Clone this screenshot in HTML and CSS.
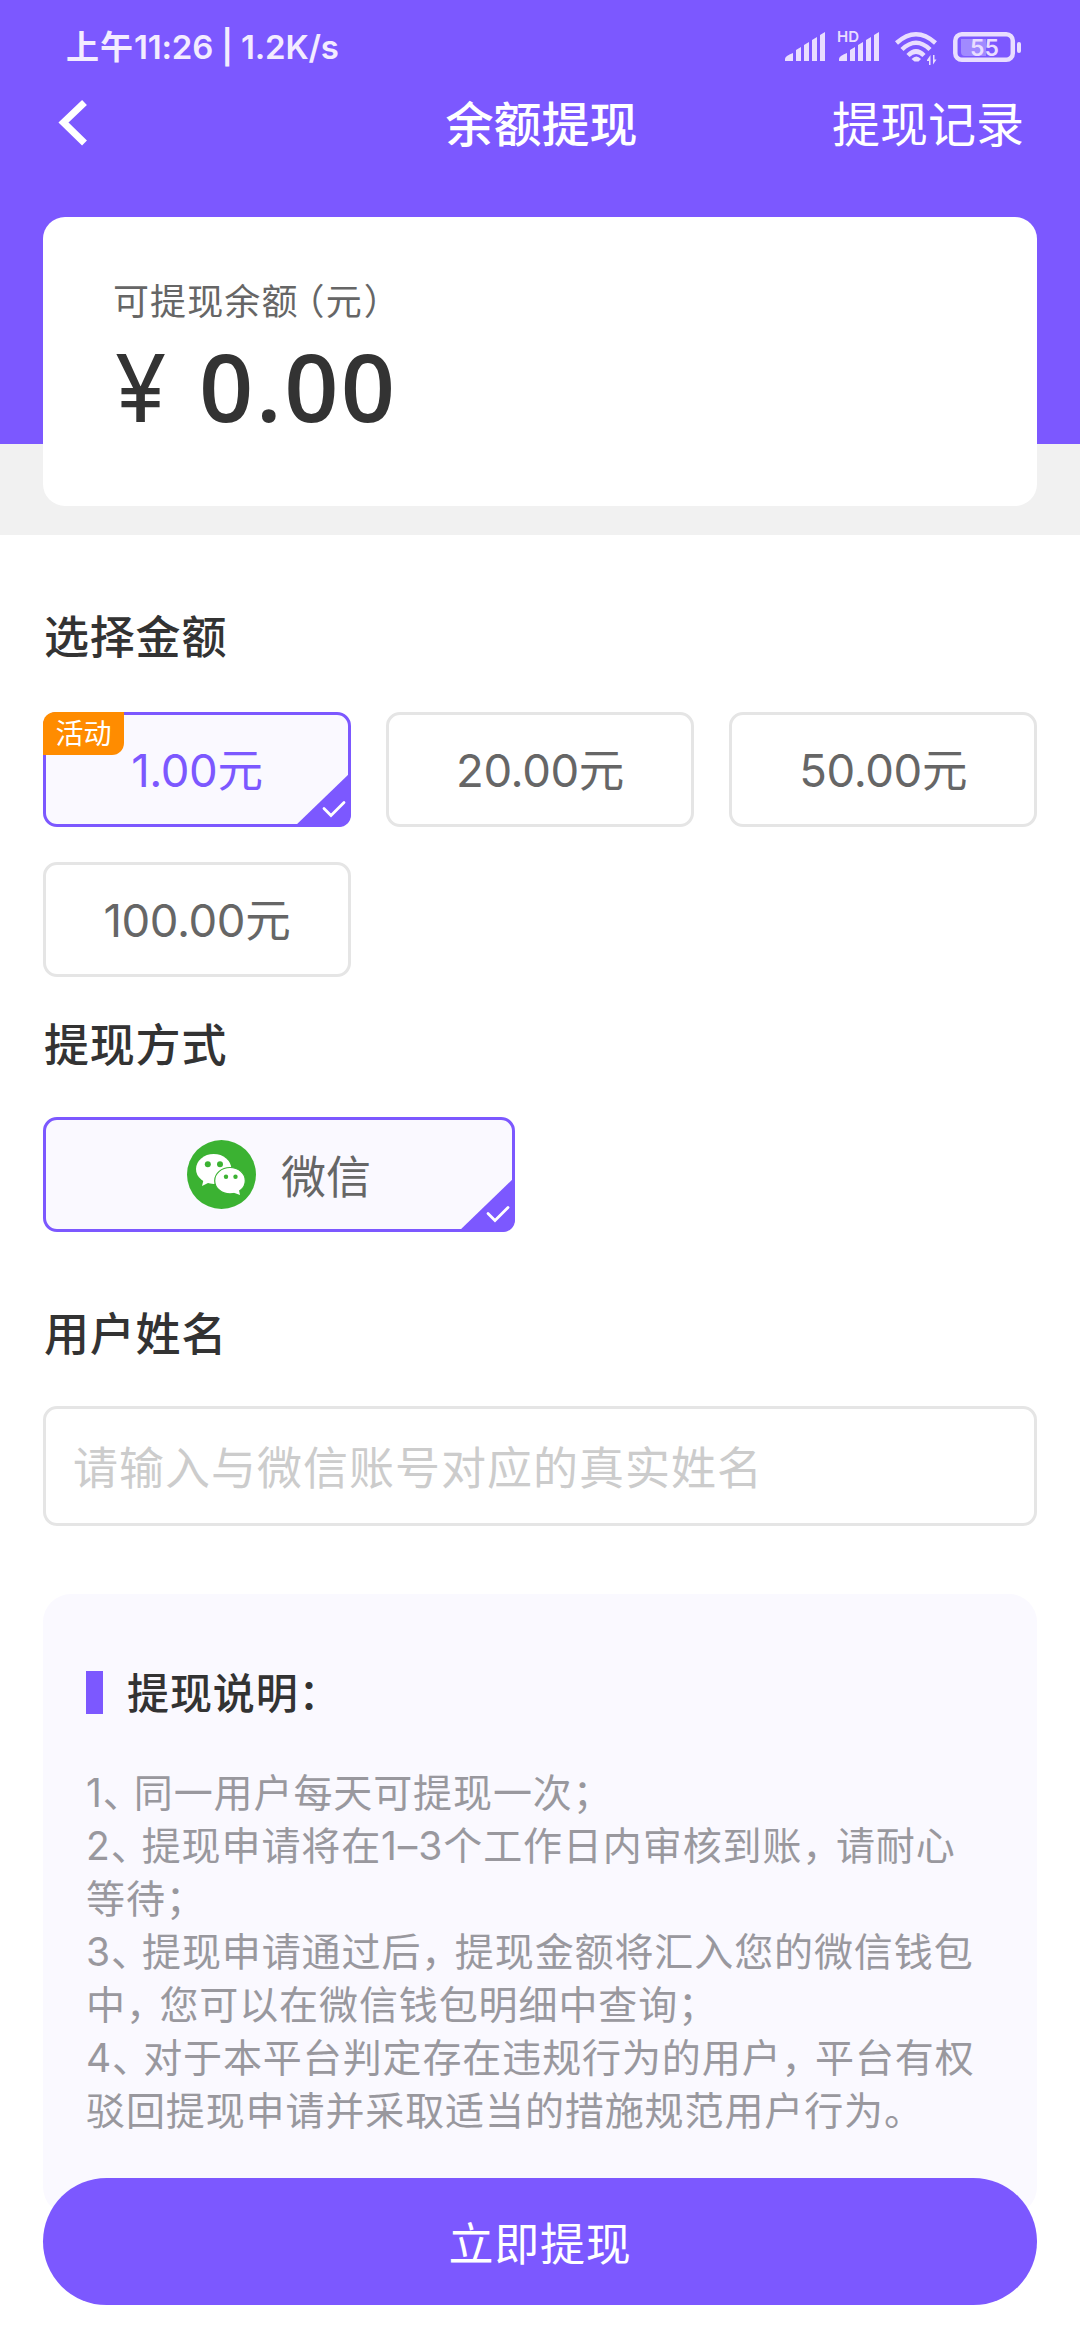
FILE: index.html
```html
<!DOCTYPE html>
<html lang="zh-CN">
<head>
<meta charset="utf-8">
<title>余额提现</title>
<link rel="stylesheet" href="styles.css">
</head>
<body>
<div class="page">
  <header class="hero">
    <div class="statusbar">
      <div class="status-text"><span class="status-cjk">上午</span>11:26 <span class="status-sep">|</span> <span class="status-rate">1.2K/s</span></div>
      <svg class="status-icons" width="240" height="40" viewBox="781 28 240 40" fill="#e9deff">
        <path d="M784 61v-2q0-3 8-6v8zM795 61V50l5-3v14zM803 61V45l5-3v19zM811 61V40l5-3v24zM819 61V35l5-3v29z"/>
        <path d="M838 61v-2q0-3 8-6v8zM849 61V50l5-3v14zM857 61V45l5-3v19zM865 61V40l5-3v24zM873 61V35l5-3v29z"/>
        <text class="hd" x="836" y="42">HD</text>
        <g fill="none" stroke="#e9deff" stroke-width="4.500">
          <path d="M895.500 43Q915 25.500 934.500 43"/>
          <path d="M901 49.500Q915 36 929 49.500"/>
          <path d="M907 55.500Q915 47.500 923 55.500" />
        </g>
        <path d="M910.500 59q5-5 9.500 0l-2.500 2.500h-4z"/>
        <path d="M926 60l3.500-5v10h-1.500v-4h-2zM935.500 59.500l-3.500 5V55h1.500v4.500z"/>
        <rect x="954.300" y="34.300" width="57.500" height="25.500" rx="6.500" fill="none" stroke="#e9deff" stroke-width="4.500"/>
        <path d="M960 39h25v17h-21q-4 0-4-4z" fill="#a18aff"/>
        <rect x="1016" y="42" width="4" height="11" rx="2"/>
        <text class="battery" x="983.500" y="55.700">55</text>
      </svg>
    </div>
    <nav class="navbar">
      <svg class="back" width="32" height="48" viewBox="0 0 32 48"><path d="M28.500 3.500L7.500 23.500l21 20.500" fill="none" stroke="#fff" stroke-width="7"/></svg>
      <h1 class="nav-title">余额提现</h1>
      <a class="nav-link">提现记录</a>
    </nav>
  </header>
  <section class="balance-wrap">
    <div class="balance">
      <div class="balance-label">可提现余额<span class="paren-open">（</span>元<span class="paren-close">）</span></div>
      <div class="balance-value"><span class="yen">¥</span><span class="amount">0.00</span></div>
    </div>
  </section>
  <main class="content">
    <h2 class="heading">选择金额</h2>
    <div class="amounts">
      <div class="option selected"><span>1.00元</span><em class="badge">活动</em>
        <svg class="tick" width="57" height="55" viewBox="-2 0 57 55"><path d="M55 0v55H-2z" fill="#7c58ff"/><path d="M28 36.500l7 7 13-13" fill="none" stroke="#fff" stroke-width="2.800" stroke-linecap="round"/></svg>
      </div>
      <div class="option"><span>20.00元</span></div>
      <div class="option"><span>50.00元</span></div>
      <div class="option"><span>100.00元</span></div>
    </div>
    <h2 class="heading heading-method">提现方式</h2>
    <div class="option selected method">
      <svg width="69" height="69" viewBox="0 0 69 69">
        <circle cx="34.500" cy="34.500" r="34.500" fill="#3bb232"/>
        <g fill="#fff">
          <ellipse cx="26.700" cy="29" rx="17.700" ry="15"/>
          <path d="M17 38l-2 8 8-4z"/>
          <ellipse cx="43" cy="40.700" rx="15.300" ry="13.200" stroke="#3bb232" stroke-width="1.200"/>
          <path d="M45 52l8 3-1.500-7z"/>
        </g>
        <g fill="#3bb232"><circle cx="20.800" cy="24.300" r="3"/><circle cx="33" cy="24.300" r="3"/><circle cx="39" cy="36.700" r="2.200"/><circle cx="48.500" cy="36.700" r="2.200"/></g>
      </svg>
      <span class="method-name">微信</span>
      <svg class="tick" width="57" height="55" viewBox="-2 0 57 55"><path d="M55 0v55H-2z" fill="#7c58ff"/><path d="M28 36.500l7 7 13-13" fill="none" stroke="#fff" stroke-width="2.800" stroke-linecap="round"/></svg>
    </div>
    <h2 class="heading heading-name">用户姓名</h2>
    <div class="field">请输入与微信账号对应的真实姓名</div>
    <section class="notes">
      <h3 class="notes-title">提现说明：</h3>
      <p>1<i>、</i>同一用户每天可提现一次；</p>
      <p>2<i>、</i>提现申请将在1–3个工作日内审核到账<u>，</u>请耐心<br>等待；</p>
      <p>3<i>、</i>提现申请通过后<u>，</u>提现金额将汇入您的微信钱包<br>中<u>，</u>您可以在微信钱包明细中查询；</p>
      <p>4<i>、</i>对于本平台判定存在违规行为的用户<u>，</u>平台有权<br>驳回提现申请并采取适当的措施规范用户行为。</p>
    </section>
    <button class="submit">立即提现</button>
  </main>
</div>
</body>
</html>
```
FILE: styles.css
```css
* { box-sizing: border-box; }
body {
  margin: 0;
  background: #fff;
  color: #333;
  font-family: Inter, "Noto Sans CJK SC", sans-serif;
}
h1, h2, h3, p { margin: 0; }
.page { width: 1080px; height: 2340px; overflow: hidden; }

.hero { height: 444px; background: #7c58ff; color: #fff; }
.statusbar {
  height: 96px;
  padding: 0 58px 0 66px;
  display: flex;
  align-items: center;
  justify-content: space-between;
}
.status-text {
  font-size: 33px;
  font-weight: 600;
  line-height: 40px;
  letter-spacing: -0.2px;
  padding-bottom: 2px;
  color: #f3ecff;
  white-space: nowrap;
}
.status-cjk { font-weight: 700; letter-spacing: 1px; }
.hd { font: 600 15px Inter, sans-serif; }
.battery { font: 600 23px Inter, sans-serif; text-anchor: middle; }
.navbar {
  height: 57px;
  padding: 1px 56px 0;
  display: grid;
  grid-template-columns: 1fr auto 1fr;
  align-items: center;
}
.back { margin-top: -4px; }
.nav-title { font-size: 48px; font-weight: 500; line-height: 56px; padding-left: 3px; }
.nav-link { font-size: 48px; line-height: 56px; justify-self: end; }

.balance-wrap {
  height: 318px;
  margin-top: -227px;
  padding: 0 43px 28px;
  background: linear-gradient(#7c58ff 227px, #f1f1f1 227px);
}
.balance {
  height: 289px;
  padding: 63px 70px;
  border-radius: 22px;
  background: #fff;
}
.balance-label { font-size: 36px; line-height: 44px; letter-spacing: 1.1px; color: #666; }
.paren-open, .paren-close { font-feature-settings: "halt"; }
.paren-open { padding-left: 8px; }
.paren-close { padding-left: 1px; }
.balance-value {
  display: flex;
  align-items: baseline;
  gap: 31px;
  font-size: 93px;
  font-weight: 600;
  line-height: 100px;
  margin-top: 11px;
}
.yen { font-weight: 400; width: 55px; padding-left: 2px; letter-spacing: -4px; }
.amount { font-family: "Open Sans", sans-serif; font-size: 95px; letter-spacing: 2.4px; }

.content { padding: 0 43px; }
.heading {
  font-size: 45px;
  font-weight: 500;
  line-height: 60px;
  letter-spacing: 0.8px;
  padding: 0 1px;
  margin-top: 73px;
}
.amounts {
  margin-top: 44px;
  display: grid;
  grid-template-columns: repeat(3, 1fr);
  gap: 35px 35.5px;
}
.option {
  position: relative;
  height: 115px;
  border: 3px solid #e5e5e5;
  border-radius: 14px;
  display: flex;
  align-items: center;
  justify-content: center;
  font-size: 45.5px;
  letter-spacing: -0.4px;
  color: #666;
  padding-bottom: 5px;
}
.option.selected { border-color: #7c58ff; background: #faf9ff; color: #7c58ff; }
.badge {
  position: absolute;
  left: -3px;
  top: -3px;
  width: 81px;
  height: 43px;
  border-radius: 12px 0;
  background: #ff8c00;
  color: #fff;
  font-size: 28px;
  font-style: normal;
  line-height: 45px;
  letter-spacing: 0;
  text-align: center;
}
.tick { position: absolute; right: -3px; bottom: -3px; border-bottom-right-radius: 12px; }
.heading-method { margin-top: 39px; }
.option.method { width: 472px; margin-top: 41px; gap: 25px; color: #666; padding: 0; }
.method-name { font-size: 45px; letter-spacing: 0; padding-bottom: 1px; }
.heading-name { margin-top: 73px; }
.field {
  height: 120px;
  margin-top: 41px;
  padding: 1px 27px 0;
  border: 3px solid #e5e5e5;
  border-radius: 14px;
  color: #ccc;
  font-size: 45px;
  letter-spacing: 1px;
  line-height: 117px;
}
.notes {
  height: 621px;
  margin-top: 68px;
  padding: 70px 43px 0;
  border-radius: 28px;
  background: #faf9ff;
  color: #99989e;
  font-size: 39px;
  line-height: 53px;
  letter-spacing: 0.9px;
  white-space: nowrap;
}
.notes-title {
  display: flex;
  align-items: center;
  gap: 24px;
  margin-bottom: 42px;
  font-size: 42px;
  font-weight: 500;
  line-height: 60px;
  color: #333;
}
.notes-title::before { content: ""; width: 17px; height: 43px; margin-top: -3px; background: #7c58ff; }
.notes i { font-style: normal; letter-spacing: -8px; }
.notes u { text-decoration: none; letter-spacing: -5.5px; }
.submit {
  position: relative;
  display: block;
  width: 994px;
  height: 127px;
  margin-top: -37px;
  border: 0;
  border-radius: 64px;
  background: #7c58ff;
  color: #fff;
  font: 400 45px Inter, "Noto Sans CJK SC", sans-serif;
  letter-spacing: 0.8px;
}
```
